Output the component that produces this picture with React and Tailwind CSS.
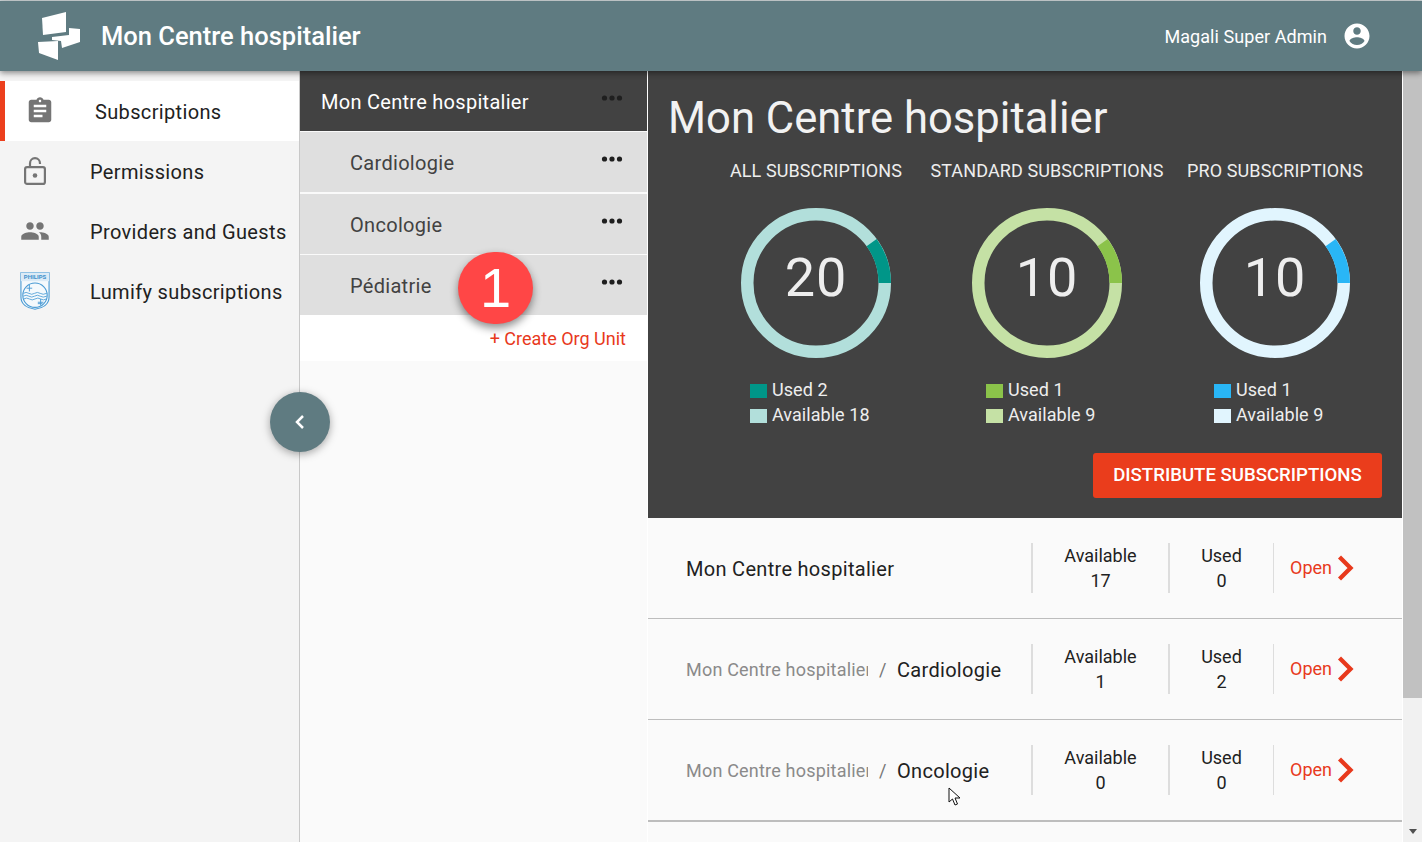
import React from "react";

const Dots = () => (
  <svg width="22" height="6" viewBox="0 0 22 6" className="block" fill="#1f1f1f">
    <circle cx="3.5" cy="3" r="2.6" />
    <circle cx="11" cy="3" r="2.6" />
    <circle cx="18.5" cy="3" r="2.6" />
  </svg>
);

const Logo = () => (
  <svg width="46" height="50" viewBox="36 11 46 50" className="block" fill="#fff">
    <polygon points="42,18 66,12 66,32 43,35" />
    <polygon points="69,28 80,29 80,42 62,48 61,41 52,40 52,37 69,35" />
    <polygon points="38,42 58,41 58,60 39,53" />
  </svg>
);

const Philips = () => (
  <svg width="30" height="40" viewBox="0 0 32 41" className="block">
    <path d="M1 1H31V27C31 35 24 39 16 40C8 39 1 35 1 27Z" fill="#f4f9fc" stroke="#4a9bd4" strokeWidth="1.2" />
    <rect x="1" y="1" width="30" height="9" fill="#dcebf6" />
    <text x="16" y="8" textAnchor="middle" fontSize="6.4" fontWeight="700" fill="#3f8fcb" fontFamily="Roboto, sans-serif">PHILIPS</text>
    <circle cx="16" cy="25" r="13" fill="none" stroke="#4a9bd4" strokeWidth="1.2" />
    <path d="M3.500 23q3-2 6 0t6 0t6 0t7 0M3.500 26q3-2 6 0t6 0t6 0t7 0M4 29q3-2 6 0t6 0t6 0t6 0" fill="none" stroke="#4a9bd4" strokeWidth="0.9" />
    <path d="M10 14v7M7 17.500h6M22 29v7M19 32.500h6M19 34h5" stroke="#4a9bd4" strokeWidth="1" fill="none" />
  </svg>
);

const Clipboard = () => (
  <svg width="30" height="30" viewBox="0 0 24 24" fill="#757575" className="block">
    <path d="M19 3h-4.180C14.400 1.840 13.300 1 12 1c-1.300 0-2.400.84-2.820 2H5c-1.100 0-2 .9-2 2v14c0 1.100.9 2 2 2h14c1.100 0 2-.9 2-2V5c0-1.100-.9-2-2-2zm-7 0c.55 0 1 .45 1 1s-.45 1-1 1-1-.45-1-1 .45-1 1-1zm2 14H7v-2h7v2zm3-4H7v-2h10v2zm0-4H7V7h10v2z" />
  </svg>
);

const Lock = () => (
  <svg width="24" height="30" viewBox="0 0 24 30" fill="none" stroke="#757575" strokeWidth="2.2" className="block">
    <rect x="2.100" y="11.100" width="19.800" height="16.800" rx="2" />
    <path d="M7 11V7.500C7 4.500 9.200 2.200 12 2.200C14.800 2.200 17 4.500 17 7.500V8" />
    <circle cx="12" cy="19.500" r="2.300" fill="#757575" stroke="none" />
  </svg>
);

const People = () => (
  <svg width="30" height="30" viewBox="0 0 24 24" fill="#757575" className="block">
    <path d="M16 11c1.660 0 2.990-1.340 2.990-3S17.660 5 16 5c-1.660 0-3 1.340-3 3s1.340 3 3 3zm-8 0c1.660 0 2.990-1.340 2.990-3S9.660 5 8 5C6.340 5 5 6.340 5 8s1.340 3 3 3zm0 2c-2.330 0-7 1.170-7 3.500V19h14v-2.500c0-2.330-4.670-3.500-7-3.500zm8 0c-.29 0-.62.020-.97.050 1.160.84 1.970 1.970 1.970 3.450V19h6v-2.500c0-2.330-4.670-3.500-7-3.500z" />
  </svg>
);

const Account = () => (
  <svg width="30" height="30" viewBox="0 0 24 24" fill="#fff" className="block">
    <path d="M12 2C6.480 2 2 6.480 2 12s4.480 10 10 10 10-4.480 10-10S17.520 2 12 2zm0 3c1.660 0 3 1.340 3 3s-1.340 3-3 3-3-1.340-3-3 1.340-3 3-3zm0 14.200c-2.500 0-4.710-1.280-6-3.220.03-1.990 4-3.080 6-3.080 1.990 0 5.970 1.090 6 3.080-1.290 1.940-3.500 3.220-6 3.220z" />
  </svg>
);

const Ring = ({ used, avail, value }) => {
  const r = 68.75;
  const c = 2 * Math.PI * r;
  return (
    <div className="relative w-[150px] h-[150px]">
      <svg width="150" height="150" viewBox="0 0 150 150" className="block">
        <circle cx="75" cy="75" r={r} fill="none" stroke={avail} strokeWidth="12.500" />
        <circle
          cx="75"
          cy="75"
          r={r}
          fill="none"
          stroke={used}
          strokeWidth="12.500"
          strokeDasharray={`${c * 0.1} ${c * 0.9}`}
          transform="rotate(-36 75 75)"
        />
      </svg>
      <div className="absolute inset-0 flex items-center justify-center pb-[10px] text-[54px] leading-none text-[#eeeeee] tracking-[1px]">
        {value}
      </div>
    </div>
  );
};

const Legend = ({ color, children }) => (
  <div className="flex items-center h-[25px] text-[18px] tracking-[0.05px] text-[#eeeeee] whitespace-nowrap">
    <span className="w-[17px] h-[14px] mr-[5px] mt-[2px]" style={{ backgroundColor: color }} />
    {children}
  </div>
);

const Stat = ({ width, title, value, used, avail, usedN, availN, legendMl }) => (
  <div className="flex flex-col items-center" style={{ width }}>
    <div className="h-[36px] pb-[2px] flex items-center text-[18px] tracking-[0.1px] text-[#eeeeee] whitespace-nowrap">{title}</div>
    <div className="mt-[19px]">
      <Ring used={used} avail={avail} value={value} />
    </div>
    <div className="mt-[19px] self-start" style={{ marginLeft: legendMl }}>
      <Legend color={used}>Used {usedN}</Legend>
      <Legend color={avail}>Available {availN}</Legend>
    </div>
  </div>
);

const SideItem = ({ icon, label, active, iconClass }) => (
  <div className={`h-[60px] flex items-center relative ${active ? "bg-white" : ""}`}>
    {active && <span className="absolute left-0 top-0 bottom-0 w-[5px] bg-[#ec3f1d]" />}
    <div className={`absolute flex justify-center ${iconClass}`}>{icon}</div>
    <span className={`text-[20px] tracking-[0.35px] text-[#212121] whitespace-nowrap mt-[2px] ${active ? "ml-[95px]" : "ml-[90px]"}`}>{label}</span>
  </div>
);

const OrgRow = ({ label, className }) => (
  <div className={`h-[60px] bg-[#dfdfdf] flex items-center justify-between pl-[50px] pr-[24px] ${className}`}>
    <span className="text-[20px] tracking-[0.3px] text-[#424242] mt-[2px]">{label}</span>
    <span className="-mt-[7px]"><Dots /></span>
  </div>
);

const Num = ({ label, value, width }) => (
  <div className="flex flex-col items-center justify-center text-[18px] leading-[25px] text-[#212121]" style={{ width }}>
    <span>{label}</span>
    <span>{value}</span>
  </div>
);

const Row = ({ parent, name, avail, used, borderClass }) => (
  <div className={`flex items-center pl-[38px] ${borderClass}`}>
    <div className="w-[345px] flex items-center mt-[2px] text-[20px] tracking-[0.3px] text-[#212121] whitespace-nowrap">
      {parent && (
        <>
          <span className="text-[18px] tracking-[0.2px] text-[#8a8a8a] w-[182px] -mt-[2px] overflow-hidden">{parent}</span>
          <span className="text-[18px] text-[#757575] ml-[11px] w-[18px] -mt-[2px]">/</span>
        </>
      )}
      <span>{name}</span>
    </div>
    <div className="h-[50px] w-[2px] bg-[#dddddd]" />
    <Num label="Available" value={avail} width="135px" />
    <div className="h-[50px] w-[2px] bg-[#dddddd]" />
    <Num label="Used" value={used} width="103px" />
    <div className="h-[50px] w-[1px] bg-[#dddddd]" />
    <span className="ml-[16px] -mt-[1px] text-[18px] text-[#e8391c]">Open</span>
    <svg width="17" height="26" viewBox="0 0 17 26" className="ml-[5px] block" fill="none" stroke="#e8391c" strokeWidth="4.300">
      <path d="M2.500 2L13.500 13L2.500 24" />
    </svg>
  </div>
);

export default function App() {
  return (
    <div className="w-[1422px] h-[842px] overflow-hidden relative bg-[#fafafa] flex flex-col font-['Roboto',sans-serif]">
      <div className="h-[1px] bg-[#cfd6d8]" />
      <header className="h-[70px] bg-[#5f7b81] flex items-center shadow-[0_2px_6px_rgba(0,0,0,0.45)] relative z-10 pl-[36px] pr-[50px]">
        <Logo />
        <span className="ml-[19px] mt-[1px] text-[25.5px] font-medium text-white whitespace-nowrap">Mon Centre hospitalier</span>
        <span className="ml-auto text-[18px] tracking-[0.06px] text-white whitespace-nowrap">Magali Super Admin</span>
        <span className="ml-[15px]"><Account /></span>
      </header>
      <div className="flex flex-1 min-h-0">
        <aside className="w-[300px] bg-[#f4f4f4] border-r border-[#c8c8c8] pt-[10px]">
          <SideItem active label="Subscriptions" icon={<Clipboard />} iconClass="left-[25px]" />
          <SideItem label="Permissions" icon={<Lock />} iconClass="left-[23px]" />
          <SideItem label="Providers and Guests" icon={<People />} iconClass="left-[20px]" />
          <SideItem label="Lumify subscriptions" icon={<Philips />} iconClass="left-[20px]" />
        </aside>
        <section className="w-[348px] bg-[#fafafa] flex flex-col border-r border-white">
          <div className="h-[60px] bg-[#424242] flex items-center justify-between pl-[21px] pr-[24px]">
            <span className="text-[20px] tracking-[0.28px] mt-[2px] text-white">Mon Centre hospitalier</span>
            <span className="-mt-[7px]"><Dots /></span>
          </div>
          <OrgRow label="Cardiologie" className="mt-[1px]" />
          <OrgRow label="Oncologie" className="mt-[2px]" />
          <OrgRow label="Pédiatrie" className="mt-[1px]" />
          <div className="h-[46px] bg-white flex items-center justify-end pr-[21px] text-[18px] text-[#e8391c]">+ Create Org Unit</div>
        </section>
        <main className="w-[754px] flex flex-col">
          <div className="h-[447px] bg-[#424242] flex flex-col">
            <div className="h-[82px] flex items-center pt-[14px] pl-[20px] text-[43.6px] text-[#f2f2f2] whitespace-nowrap">Mon Centre hospitalier</div>
            <div className="flex pl-[52px]">
              <Stat width="232px" title="ALL SUBSCRIPTIONS" value="20" used="#009688" avail="#b2dfdb" usedN="2" availN="18" legendMl="50px" />
              <Stat width="230px" title="STANDARD SUBSCRIPTIONS" value="10" used="#8bc34a" avail="#c5e1a5" usedN="1" availN="9" legendMl="54px" />
              <Stat width="226px" title="PRO SUBSCRIPTIONS" value="10" used="#29b6f6" avail="#e1f5fe" usedN="1" availN="9" legendMl="52px" />
            </div>
            <div className="flex justify-end pr-[20px] mt-[26px]">
              <button className="w-[289px] h-[45px] rounded-[3px] bg-[#ea3d1c] text-white text-[18.600px] font-medium">DISTRIBUTE SUBSCRIPTIONS</button>
            </div>
          </div>
          <Row name="Mon Centre hospitalier" avail="17" used="0" borderClass="h-[101px] border-b border-[#bdbdbd]" />
          <Row parent="Mon Centre hospitalier" name="Cardiologie" avail="1" used="2" borderClass="h-[101px] border-b border-[#bdbdbd]" />
          <Row parent="Mon Centre hospitalier" name="Oncologie" avail="0" used="0" borderClass="h-[102px] border-b-2 border-[#bdbdbd]" />
        </main>
        <div className="w-[20px] bg-[#f1f1f1] border-l border-white flex flex-col">
          <div className="h-[627px] bg-[#c1c1c1]" />
          <div className="mt-auto h-[21px] flex items-center justify-center">
            <span className="w-0 h-0 border-x-[4px] border-x-transparent border-t-[5px] border-t-[#505050]" />
          </div>
        </div>
      </div>

      <div className="absolute left-[270px] top-[392px] w-[60px] h-[60px] rounded-full bg-[#5f7b81] shadow-[0_2px_8px_rgba(0,0,0,0.35)] flex items-center justify-center z-20">
        <svg width="12" height="16" viewBox="0 0 12 16" fill="none" stroke="#fff" strokeWidth="2.500" className="block">
          <path d="M9 2L3 8L9 14" />
        </svg>
      </div>
      <div className="absolute left-[458px] top-[252px] w-[75px] h-[72px] rounded-full bg-[#ff4646] shadow-[0_4px_8px_rgba(0,0,0,0.45)] flex items-center justify-center text-white text-[56px] font-['Liberation_Sans',sans-serif] z-20">1</div>
      <svg width="14" height="20" viewBox="0 0 14 20" className="absolute left-[948px] top-[787px] z-20">
        <path d="M1 1V15L4.500 12L7 18L9.500 17L7 11H12Z" fill="#fff" stroke="#111" strokeWidth="1" />
      </svg>
    </div>
  );
}
